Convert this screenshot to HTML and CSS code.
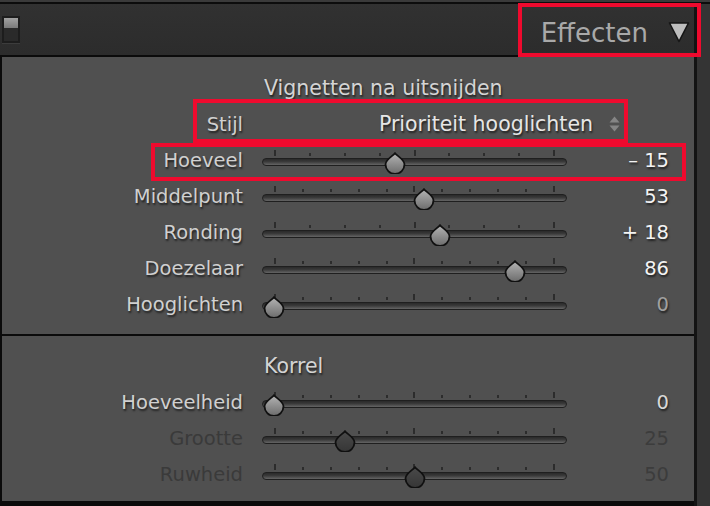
FILE: index.html
```html
<!DOCTYPE html>
<html lang="nl">
<head>
<meta charset="utf-8">
<title>Effecten</title>
<link rel="stylesheet" href="styles.css">
</head>
<body>
<div class="app">
  <svg class="defs" aria-hidden="true">
    <defs>
      <linearGradient id="thumbOn" x1="0" y1="0" x2="0" y2="1">
        <stop offset="0" stop-color="#b4b4b4"/>
        <stop offset="0.55" stop-color="#8c8c8c"/>
        <stop offset="1" stop-color="#6c6c6c"/>
      </linearGradient>
      <linearGradient id="thumbOff" x1="0" y1="0" x2="0" y2="1">
        <stop offset="0" stop-color="#4a4a4a"/>
        <stop offset="1" stop-color="#363636"/>
      </linearGradient>
      <path id="drop" d="M12 1.2 C13.8 3.8 21.5 7.5 21.5 12.3 A9.5 9.5 0 0 1 2.5 12.3 C2.5 7.5 10.2 3.8 12 1.2 Z"/>
    </defs>
  </svg>
  <div class="topline"></div>
  <div class="main">
    <div class="col">
      <header class="hdr">
        <div class="switch"><span class="sw-on"></span><span class="sw-off"></span></div>
        <div class="hdr-title">
          <span>Effecten</span>
          <svg class="tri" viewBox="0 0 22 22" width="22" height="22"><polygon points="1.5,2 20.5,2 11,20.5" fill="#bdbdbd" stroke="#151515" stroke-width="1.6" stroke-linejoin="round"/></svg>
        </div>
      </header>
      <div class="panel">
        <section class="sec sec1">
          <div class="row"><span class="sec-title">Vignetten na uitsnijden</span></div>
          <div class="row">
            <span class="lbl">Stijl</span>
            <div class="popup">
              <span>Prioriteit hooglichten</span>
              <svg class="updown" viewBox="0 0 11 18" width="11" height="18"><polygon points="0.5,7.5 5.5,1.5 10.5,7.5" fill="#858585"/><polygon points="0.5,10.5 5.5,16.5 10.5,10.5" fill="#858585"/></svg>
            </div>
          </div>
          <div class="row">
            <span class="lbl">Hoeveel</span>
            <div class="slider">
              <div class="ticks"><i class="tall"></i><i></i><i></i><i></i><i class="tall"></i><i></i><i></i><i></i><i class="tall"></i></div>
              <div class="track"></div>
              <svg class="thumb" style="left:121px" viewBox="0 0 24 22" width="24" height="22"><use href="#drop" fill="url(#thumbOn)" stroke="#101010" stroke-width="1.8"/></svg>
            </div>
            <span class="val">– 15</span>
          </div>
          <div class="row">
            <span class="lbl">Middelpunt</span>
            <div class="slider">
              <div class="ticks"><i class="tall"></i><i></i><i></i><i></i><i></i><i class="tall"></i><i></i><i></i><i></i><i></i><i class="tall"></i></div>
              <div class="track"></div>
              <svg class="thumb" style="left:150px" viewBox="0 0 24 22" width="24" height="22"><use href="#drop" fill="url(#thumbOn)" stroke="#101010" stroke-width="1.8"/></svg>
            </div>
            <span class="val">53</span>
          </div>
          <div class="row">
            <span class="lbl">Ronding</span>
            <div class="slider">
              <div class="ticks"><i class="tall"></i><i></i><i></i><i></i><i class="tall"></i><i></i><i></i><i></i><i class="tall"></i></div>
              <div class="track"></div>
              <svg class="thumb" style="left:166px" viewBox="0 0 24 22" width="24" height="22"><use href="#drop" fill="url(#thumbOn)" stroke="#101010" stroke-width="1.8"/></svg>
            </div>
            <span class="val">+ 18</span>
          </div>
          <div class="row">
            <span class="lbl">Doezelaar</span>
            <div class="slider">
              <div class="ticks"><i class="tall"></i><i></i><i></i><i></i><i></i><i class="tall"></i><i></i><i></i><i></i><i></i><i class="tall"></i></div>
              <div class="track"></div>
              <svg class="thumb" style="left:241px" viewBox="0 0 24 22" width="24" height="22"><use href="#drop" fill="url(#thumbOn)" stroke="#101010" stroke-width="1.8"/></svg>
            </div>
            <span class="val">86</span>
          </div>
          <div class="row">
            <span class="lbl">Hooglichten</span>
            <div class="slider">
              <div class="ticks"><i class="tall"></i><i></i><i></i><i></i><i></i><i class="tall"></i><i></i><i></i><i></i><i></i><i class="tall"></i></div>
              <div class="track"></div>
              <svg class="thumb" style="left:0px" viewBox="0 0 24 22" width="24" height="22"><use href="#drop" fill="url(#thumbOn)" stroke="#101010" stroke-width="1.8"/></svg>
            </div>
            <span class="val val-mid">0</span>
          </div>
        </section>
        <section class="sec sec2">
          <div class="row"><span class="sec-title">Korrel</span></div>
          <div class="row">
            <span class="lbl">Hoeveelheid</span>
            <div class="slider">
              <div class="ticks"><i class="tall"></i><i></i><i></i><i></i><i></i><i class="tall"></i><i></i><i></i><i></i><i></i><i class="tall"></i></div>
              <div class="track"></div>
              <svg class="thumb" style="left:0px" viewBox="0 0 24 22" width="24" height="22"><use href="#drop" fill="url(#thumbOn)" stroke="#101010" stroke-width="1.8"/></svg>
            </div>
            <span class="val val-soft">0</span>
          </div>
          <div class="row off">
            <span class="lbl">Grootte</span>
            <div class="slider">
              <div class="ticks"><i class="tall"></i><i></i><i></i><i></i><i></i><i class="tall"></i><i></i><i></i><i></i><i></i><i class="tall"></i></div>
              <div class="track"></div>
              <svg class="thumb" style="left:71px" viewBox="0 0 24 22" width="24" height="22"><use href="#drop" fill="url(#thumbOff)" stroke="#101010" stroke-width="1.8"/></svg>
            </div>
            <span class="val">25</span>
          </div>
          <div class="row off">
            <span class="lbl">Ruwheid</span>
            <div class="slider">
              <div class="ticks"><i class="tall"></i><i></i><i></i><i></i><i></i><i class="tall"></i><i></i><i></i><i></i><i></i><i class="tall"></i></div>
              <div class="track"></div>
              <svg class="thumb" style="left:141px" viewBox="0 0 24 22" width="24" height="22"><use href="#drop" fill="url(#thumbOff)" stroke="#101010" stroke-width="1.8"/></svg>
            </div>
            <span class="val">50</span>
          </div>
        </section>
      </div>
    </div>
    <div class="scroll"></div>
  </div>
  <div class="mark mark-effecten"></div>
  <div class="mark mark-stijl"></div>
  <div class="mark mark-hoeveel"></div>
</div>
</body>
</html>
```
FILE: styles.css
```css
* { box-sizing: border-box; }

body {
  margin: 0;
  background: #2e2e2e;
  font-family: "DejaVu Sans", "Liberation Sans", sans-serif;
}

.app {
  position: relative;
  width: 710px;
  height: 506px;
  overflow: hidden;
  background: #333333;
  display: flex;
  flex-direction: column;
}

.defs {
  position: absolute;
  width: 0;
  height: 0;
}

.topline {
  height: 4px;
  background: #3a3a3a;
  border-bottom: 2px solid #0c0c0c;
}

.main {
  flex: 1;
  display: flex;
  min-height: 0;
}

.col {
  width: 694px;
  display: flex;
  flex-direction: column;
}

.scroll {
  flex: 1;
  background: #343434;
  border-left: 3px solid #131313;
}

/* header */
.hdr {
  height: 53px;
  background: linear-gradient(#313131, #2c2c2c);
  border-bottom: 2px solid #0b0b0b;
  display: flex;
  align-items: center;
  justify-content: space-between;
  padding: 0 4px 0 2px;
}

.switch {
  width: 18px;
  height: 27px;
  border: 2px solid #1d1d1d;
  display: flex;
  flex-direction: column;
  box-shadow: 0 1px 0 #3c3c3c;
}

.sw-on {
  height: 10px;
  background: linear-gradient(#a2a2a2, #7a7a7a);
}

.sw-off {
  flex: 1;
  background: #2a2a2a;
}

.hdr-title {
  display: flex;
  align-items: center;
  gap: 20px;
  padding-top: 6px;
  color: #a9a9a9;
  font-size: 26px;
  line-height: 1;
}

.tri { display: block; margin-top: -1px; }

/* panel */
.panel {
  flex: 1;
  background: #505050;
  border-left: 2px solid #0b0b0b;
  border-bottom: 5px solid #0b0b0b;
  display: flex;
  flex-direction: column;
}

.sec1 {
  padding: 13px 0 12px;
  border-bottom: 2px solid #0b0b0b;
}

.sec2 {
  flex: 1;
  padding-top: 12px;
}

.row {
  height: 36px;
  display: grid;
  grid-template-columns: 241px 305px 83px;
  column-gap: 19px;
  align-items: center;
  color: #d0d0d0;
  font-size: 19.5px;
  text-shadow: 1px 2px 2px rgba(0, 0, 0, 0.6);
}

.lbl {
  grid-column: 1;
  text-align: right;
  white-space: nowrap;
}

.sec-title {
  grid-column: 2 / 4;
  padding-left: 2px;
  font-size: 20.5px;
  color: #d4d4d4;
  white-space: nowrap;
}

.popup {
  grid-column: 2 / 4;
  display: flex;
  align-items: center;
  justify-content: flex-end;
  gap: 16px;
  padding-right: 49px;
  font-size: 20.5px;
  color: #e6e6e6;
  white-space: nowrap;
}

.updown { display: block; }

.slider {
  position: relative;
  height: 36px;
}

.ticks {
  height: 16px;
  padding: 0 12px 2px;
  display: flex;
  justify-content: space-between;
  align-items: flex-end;
}

.ticks i {
  display: block;
  width: 2px;
  height: 3px;
  background: #2c2c2c;
}

.ticks i.tall { height: 6px; }

.track {
  height: 8px;
  border: 1px solid #1f1f1f;
  border-radius: 4px;
  background: linear-gradient(#2a2a2a, #3a3a3a 45%, #656565);
}

.thumb {
  position: absolute;
  top: 10px;
  display: block;
}

.val {
  grid-column: 3;
  text-align: right;
  color: #f3f3f3;
  white-space: nowrap;
}

.val-mid { color: #a0a0a0; }
.val-soft { color: #d8d8d8; }

.row.off {
  color: #3a3a3a;
  text-shadow: none;
}

.row.off .val { color: #3c3c3c; }

/* annotation boxes */
.mark {
  position: absolute;
  border: 4px solid #ef0a2e;
}

.mark-effecten { left: 518px; top: 3px; width: 183px; height: 54px; }
.mark-stijl { left: 193px; top: 99px; width: 435px; height: 44px; }
.mark-hoeveel { left: 151px; top: 143px; width: 535px; height: 38px; }
```
